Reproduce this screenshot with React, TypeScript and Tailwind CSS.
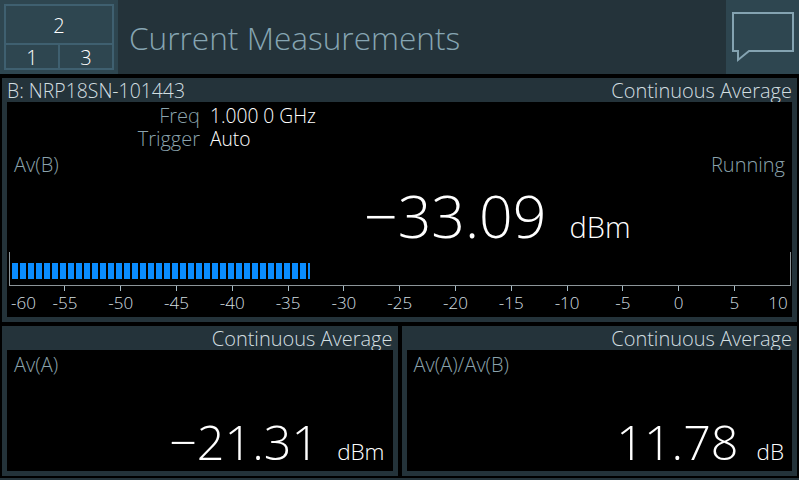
import { Fragment } from 'react';

const ticks = [-55, -50, -45, -40, -35, -30, -25, -20, -15, -10, -5, 0, 5];
const bars = Array.from({ length: 37 }, (_, i) => i);

function TitleBar({ left, right }: { left?: string; right: string }) {
  return (
    <div className="h-6 flex items-center justify-between px-[5px] pt-[1px] leading-6 font-light text-[#d3dfe1]">
      <span className="text-[19.4px]">{left}</span>
      <span className="text-[20px]">{right}</span>
    </div>
  );
}

function SmallPanel({ label, value, unit }: { label: string; value: string; unit: string }) {
  return (
    <div className="flex-1 h-[150px] bg-[#24333a] flex flex-col">
      <TitleBar right="Continuous Average" />
      <div className="mx-[5px] mb-[5px] flex-1 bg-black flex flex-col justify-between px-[7px]">
        <div className="text-[20px] leading-6 mt-[3px] font-light text-[#8ba3ad]">{label}</div>
        <div className="flex items-baseline justify-end pb-[1px] pr-[1px] text-white">
          <span className="text-[48.5px] leading-[58px] font-light">{value}</span>
          <span className="ml-[18px] text-[22.5px] leading-7 font-light">{unit}</span>
        </div>
      </div>
    </div>
  );
}

export default function App() {
  return (
    <div
      className="w-[799px] h-[480px] bg-black overflow-hidden flex flex-col"
      style={{ fontFamily: '"Open Sans", "Noto Sans", sans-serif' }}
    >
      <header className="h-[74px] bg-[#24333a] flex shrink-0">
        <div className="w-[118px] bg-[#2e4650] p-1">
          <div className="w-[110px] h-[66px] border-2 border-[#3f6070] flex flex-col text-white text-[20px] leading-none font-light">
            <div className="h-[39px] flex items-center justify-center pt-[2px] border-b-2 border-[#3f6070]">2</div>
            <div className="flex-1 flex">
              <div className="w-[54px] flex items-center justify-center pt-[3px] border-r-2 border-[#3f6070]">1</div>
              <div className="flex-1 flex items-center justify-center pt-[3px]">3</div>
            </div>
          </div>
        </div>
        <h1 className="flex-1 pl-[11px] pt-[1px] text-[31.6px] leading-[74px] font-light text-[#86a5b2]">Current Measurements</h1>
        <div className="w-[73px] bg-[#2e4650]">
          <svg width="73" height="74" viewBox="0 0 73 74" fill="none">
            <path d="M7 13H67V51H23L12 60V51H7Z" stroke="#84a3b1" strokeWidth="2" />
          </svg>
        </div>
      </header>

      <main className="mt-1 px-[2px] flex flex-col gap-1">
        <section className="h-[244px] bg-[#24333a] flex flex-col">
          <TitleBar left="B: NRP18SN-101443" right="Continuous Average" />
          <div className="mx-[5px] mb-[5px] flex-1 bg-black flex flex-col">
            <div className="grid grid-cols-[193px_1fr] gap-x-[10px] leading-[23px] mt-[2px] font-light">
              {[
                ['Freq', '1.000 0 GHz'],
                ['Trigger', 'Auto'],
              ].map(([k, v]) => (
                <Fragment key={k}>
                  <span className="text-right text-[20px] text-[#8ba3ad]">{k}</span>
                  <span className="text-[19.2px] text-white">{v}</span>
                </Fragment>
              ))}
            </div>
            <div className="flex justify-between mt-[3px] px-[7px] text-[20px] leading-6 font-light text-[#8ba3ad]">
              <span>Av(B)</span>
              <span>Running</span>
            </div>
            <div className="h-[75px] flex items-baseline pt-[3px] pl-[357px] text-white">
              <span className="text-[59px] leading-[70px] font-light">−33.09</span>
              <span className="ml-[23px] text-[29px] leading-7 font-light">dBm</span>
            </div>
            <div className="ml-[2px] w-[782px] h-[34px] border-x border-b border-[#8c9599] flex items-start pt-[11px] pl-[2px] gap-[2px]">
              {bars.map((b) => (
                <div key={b} className="w-[6px] h-4 bg-[#0a8cff]" />
              ))}
              <div className="w-[2px] h-4 bg-[#0a8cff]" />
            </div>
            <div className="ml-[2px] flex text-[17px] font-light text-[#d3dfe1]">
              <div className="w-[28px] pt-[5px] pr-[1px] leading-6 text-right">-60</div>
              {ticks.map((t) => (
                <div key={t} className="w-[55.8px] flex flex-col items-center">
                  <div className="w-[1px] h-[5px] bg-[#a8bcc6]" />
                  <span className="leading-6">{t}</span>
                </div>
              ))}
              <div className="flex-1 pt-[5px] pl-[6px] leading-6">10</div>
            </div>
          </div>
        </section>

        <div className="flex gap-1">
          <SmallPanel label="Av(A)" value="−21.31" unit="dBm" />
          <SmallPanel label="Av(A)/Av(B)" value="11.78" unit="dB" />
        </div>
      </main>
      <div className="mt-[2px] h-[2px] bg-[#24333a] shrink-0" />
    </div>
  );
}
